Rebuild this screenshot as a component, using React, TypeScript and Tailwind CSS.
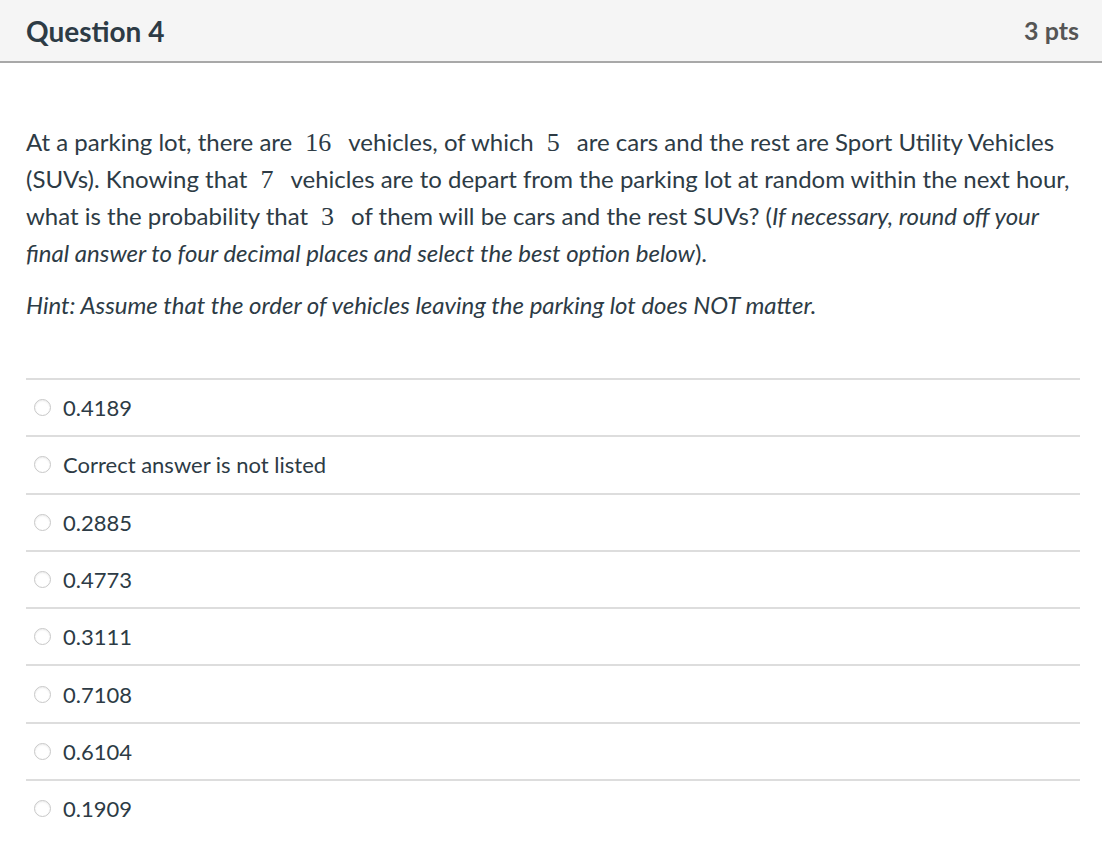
import React from "react";

const ANSWERS = ["0.4189", "Correct answer is not listed", "0.2885", "0.4773", "0.3111", "0.7108", "0.6104", "0.1909"];

// MathJax-style inline numbers
function M({ children }: { children: React.ReactNode }) {
  return (
    <span className="ml-[13px] mr-[17px] font-['Liberation_Serif',serif] text-[26px]">{children}</span>
  );
}

export default function App() {
  return (
    <div className="min-h-[862px] bg-white font-['Lato',sans-serif] text-[#2d3b45]">
      <div className="flex h-[63px] items-center justify-between border-b-2 border-[#a8a8a8] bg-[#f5f5f5] pl-[26px] pr-[23px]">
        <h2 className="text-[28px] font-bold">Question 4</h2>
        <span className="text-[25px] font-bold text-[#555]">3 pts</span>
      </div>

      <div className="px-[26px] pt-[61px]">
        <p className="text-[24px] leading-[36px]">
          At a parking lot, there are<M>16</M>vehicles, of which<M>5</M>are cars and the rest are Sport Utility Vehicles
          (SUVs). Knowing that<M>7</M>vehicles are to depart from the parking lot at random within the next hour, what is the
          probability that<M>3</M>of them will be cars and the rest SUVs? (
          <em>If necessary, round off your final answer to four decimal places and select the best option below</em>).
        </p>
        <p className="mt-[16px] text-[24px] italic leading-[36px]">
          Hint: Assume that the order of vehicles leaving the parking lot does NOT matter.
        </p>

        <div className="mt-[55px] w-[1054px]">
          {ANSWERS.map((a) => (
            <div key={a} className="flex h-[57.3px] items-center gap-[12px] border-t-2 border-[#dddddd] pl-[8px]">
              <span className="h-[17px] w-[17px] rounded-full border border-[#c8c8c8] bg-white shadow-[inset_0_1px_2px_rgba(0,0,0,0.08)]" />
              <span className="text-[22px]">{a}</span>
            </div>
          ))}
        </div>
      </div>
    </div>
  );
}
